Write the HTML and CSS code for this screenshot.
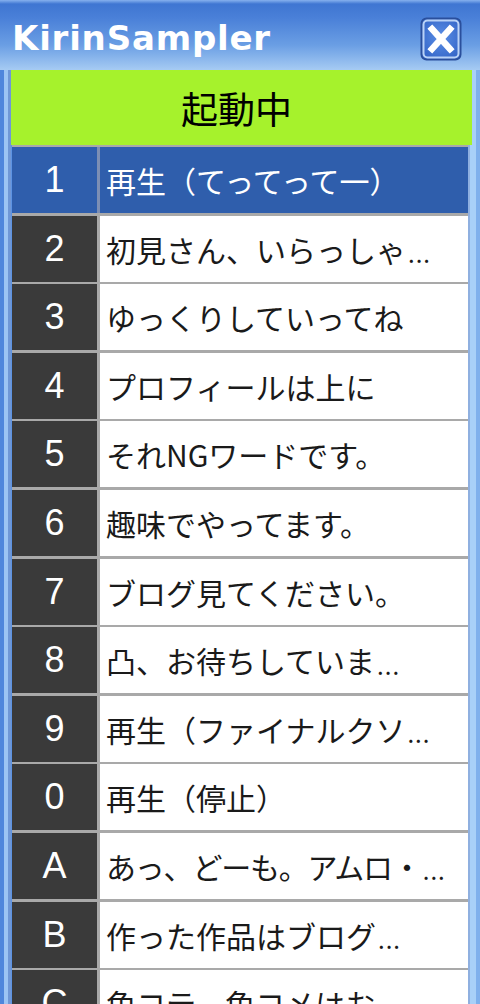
FILE: index.html
```html
<!DOCTYPE html>
<html lang="ja">
<head>
<meta charset="utf-8">
<title>KirinSampler</title>
<link rel="stylesheet" href="styles.css">
</head>
<body>
<div class="window">
  <div class="titlebar">
    <span class="title">KirinSampler</span>
    <span class="close">
      <svg width="42" height="44" viewBox="0 0 42 44">
        <defs>
          <radialGradient id="cg" cx="50%" cy="45%" r="60%">
            <stop offset="0" stop-color="#5b8fe6"/>
            <stop offset="1" stop-color="#3566c8"/>
          </radialGradient>
        </defs>
        <rect x="1.5" y="1.5" width="39" height="41" rx="5" fill="url(#cg)" stroke="#2a4f9c" stroke-width="2"/>
        <rect x="3.5" y="3.5" width="35" height="37" rx="4" fill="none" stroke="#b9d2f6" stroke-width="2"/>
        <path d="M12 12 L30 32 M30 12 L12 32" stroke="#ffffff" stroke-width="6.5" stroke-linecap="square"/>
      </svg>
    </span>
  </div>
  <div class="client">
    <div class="status">起動中</div>
    <div class="list">
      <div class="row selected"><div class="key">1</div><div class="label">再生（てってって一）</div></div>
      <div class="row"><div class="key">2</div><div class="label">初見さん、いらっしゃ<span class="dots">...</span></div></div>
      <div class="row"><div class="key">3</div><div class="label">ゆっくりしていってね</div></div>
      <div class="row"><div class="key">4</div><div class="label">プロフィールは上に</div></div>
      <div class="row"><div class="key">5</div><div class="label">それNGワードです。</div></div>
      <div class="row"><div class="key">6</div><div class="label">趣味でやってます。</div></div>
      <div class="row"><div class="key">7</div><div class="label">ブログ見てください。</div></div>
      <div class="row"><div class="key">8</div><div class="label">凸、お待ちしていま<span class="dots">...</span></div></div>
      <div class="row"><div class="key">9</div><div class="label">再生（ファイナルクソ<span class="dots">...</span></div></div>
      <div class="row"><div class="key">0</div><div class="label">再生（停止）</div></div>
      <div class="row"><div class="key">A</div><div class="label tight">あっ、どーも。アムロ・<span class="dots">...</span></div></div>
      <div class="row"><div class="key">B</div><div class="label">作った作品はブログ<span class="dots">...</span></div></div>
      <div class="row"><div class="key">C</div><div class="label">色コテ、色コメはお<span class="dots">...</span></div></div>
    </div>
  </div>
</div>
</body>
</html>
```

FILE: styles.css
```css
html, body {
  margin: 0;
  padding: 0;
  overflow: hidden;
  background: #5d93e2;
}

.window {
  width: 480px;
  height: 1100px;
  background:
    linear-gradient(to right,
      #4f86dc 0, #4f86dc 4px,
      #9cc4f4 4px, #9cc4f4 8px,
      #6f97d6 8px, #6f97d6 11px,
      transparent 11px, transparent 467px,
      #8fb0e0 467px, #8fb0e0 470px,
      #a8d0f8 470px, #a8d0f8 476px,
      #7fb0ec 476px);
  display: flex;
  flex-direction: column;
}

.titlebar {
  height: 70px;
  box-sizing: border-box;
  padding: 10px 18px 0 12px;
  display: flex;
  align-items: center;
  justify-content: space-between;
  background: linear-gradient(#86b1ee 0, #3f76d2 4px, #4a80d8 18px, #6a9ee4 45px, #a6cbf3 70px);
}

.title {
  font-family: "DejaVu Sans", "Liberation Sans", sans-serif;
  font-weight: bold;
  font-size: 34px;
  letter-spacing: 0.8px;
  color: #ffffff;
  line-height: 1;
  margin-top: -4px;
}

.close {
  display: flex;
  margin-top: -2px;
}

.client {
  margin: 0 8px 0 11px;
  display: flex;
  flex-direction: column;
}

.status {
  height: 75px;
  background: #a6f22c;
  display: flex;
  align-items: center;
  justify-content: center;
  font-family: "Noto Sans CJK JP", sans-serif;
  font-size: 37px;
  color: #000000;
  padding-right: 10px;
}

.list {
  display: flex;
  flex-direction: column;
  gap: 2.6px;
  padding-top: 2px;
  margin-left: 1px;
  margin-right: 4px;
  background: #a9a9a9;
}

.row {
  height: 66px;
  display: grid;
  grid-template-columns: 85px 1fr;
  column-gap: 3px;
}

.key {
  background: #3a3a3a;
  color: #ffffff;
  font-family: "Liberation Sans", "DejaVu Sans", sans-serif;
  font-size: 36px;
  display: flex;
  align-items: center;
  justify-content: center;
}

.label {
  background: #ffffff;
  color: #1a1a1a;
  font-family: "Noto Sans CJK JP", sans-serif;
  font-size: 30px;
  display: flex;
  align-items: center;
  padding-left: 6px;
  white-space: nowrap;
  overflow: hidden;
}

.label.tight {
  letter-spacing: -1.2px;
}

.dots {
  letter-spacing: 1px;
  font-size: 24px;
  align-self: center;
  margin-top: 8px;
  margin-left: 2px;
}

.row.selected .key,
.row.selected .label {
  background: #2f5eac;
  color: #ffffff;
}

.row.selected {
  background: #7d8fb4;
}
```
